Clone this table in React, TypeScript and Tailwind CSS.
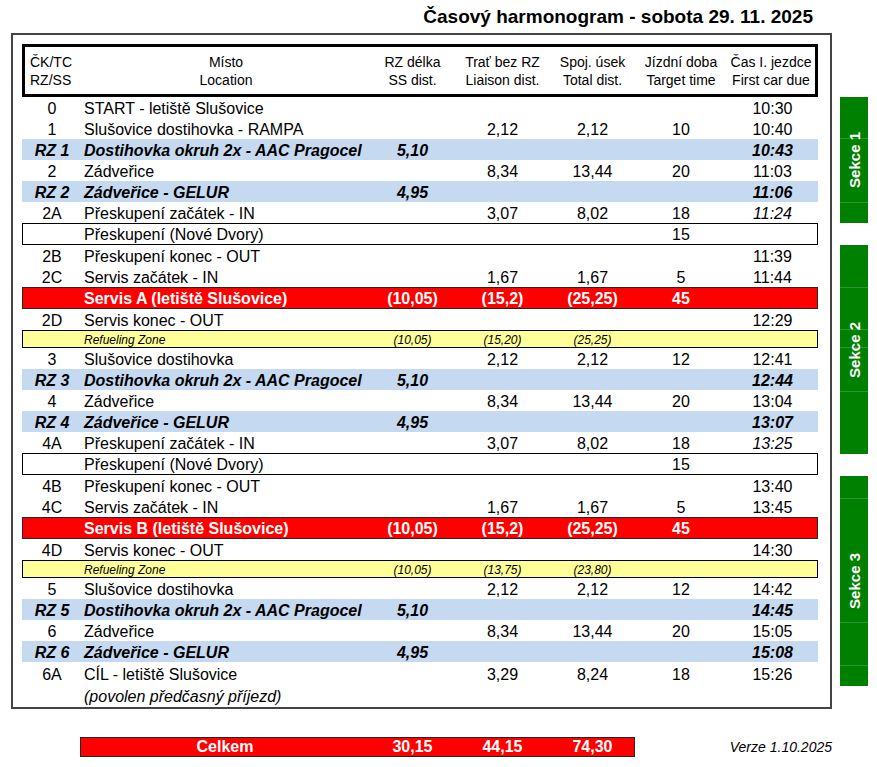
type Kind = "plain" | "rz" | "box" | "red" | "ref" | "note" | "last";

interface Row {
  kind: Kind;
  id?: string;
  name: string;
  rz?: string;
  trat?: string;
  spoj?: string;
  doba?: string;
  cas?: string;
  casItalic?: boolean;
}

const rows: Row[] = [
  { kind: "plain", id: "0", name: "START - letiště Slušovice", cas: "10:30" },
  { kind: "plain", id: "1", name: "Slušovice dostihovka - RAMPA", trat: "2,12", spoj: "2,12", doba: "10", cas: "10:40" },
  { kind: "rz", id: "RZ 1", name: "Dostihovka okruh 2x - AAC Pragocel", rz: "5,10", cas: "10:43" },
  { kind: "plain", id: "2", name: "Zádveřice", trat: "8,34", spoj: "13,44", doba: "20", cas: "11:03" },
  { kind: "rz", id: "RZ 2", name: "Zádveřice - GELUR", rz: "4,95", cas: "11:06" },
  { kind: "plain", id: "2A", name: "Přeskupení začátek - IN", trat: "3,07", spoj: "8,02", doba: "18", cas: "11:24", casItalic: true },
  { kind: "box", name: "Přeskupení (Nové Dvory)", doba: "15" },
  { kind: "plain", id: "2B", name: "Přeskupení konec - OUT", cas: "11:39" },
  { kind: "plain", id: "2C", name: "Servis začátek - IN", trat: "1,67", spoj: "1,67", doba: "5", cas: "11:44" },
  { kind: "red", name: "Servis A (letiště Slušovice)", rz: "(10,05)", trat: "(15,2)", spoj: "(25,25)", doba: "45" },
  { kind: "plain", id: "2D", name: "Servis konec - OUT", cas: "12:29" },
  { kind: "ref", name: "Refueling Zone", rz: "(10,05)", trat: "(15,20)", spoj: "(25,25)" },
  { kind: "plain", id: "3", name: "Slušovice dostihovka", trat: "2,12", spoj: "2,12", doba: "12", cas: "12:41" },
  { kind: "rz", id: "RZ 3", name: "Dostihovka okruh 2x - AAC Pragocel", rz: "5,10", cas: "12:44" },
  { kind: "plain", id: "4", name: "Zádveřice", trat: "8,34", spoj: "13,44", doba: "20", cas: "13:04" },
  { kind: "rz", id: "RZ 4", name: "Zádveřice - GELUR", rz: "4,95", cas: "13:07" },
  { kind: "plain", id: "4A", name: "Přeskupení začátek - IN", trat: "3,07", spoj: "8,02", doba: "18", cas: "13:25", casItalic: true },
  { kind: "box", name: "Přeskupení (Nové Dvory)", doba: "15" },
  { kind: "plain", id: "4B", name: "Přeskupení konec - OUT", cas: "13:40" },
  { kind: "plain", id: "4C", name: "Servis začátek - IN", trat: "1,67", spoj: "1,67", doba: "5", cas: "13:45" },
  { kind: "red", name: "Servis B (letiště Slušovice)", rz: "(10,05)", trat: "(15,2)", spoj: "(25,25)", doba: "45" },
  { kind: "plain", id: "4D", name: "Servis konec - OUT", cas: "14:30" },
  { kind: "ref", name: "Refueling Zone", rz: "(10,05)", trat: "(13,75)", spoj: "(23,80)" },
  { kind: "plain", id: "5", name: "Slušovice dostihovka", trat: "2,12", spoj: "2,12", doba: "12", cas: "14:42" },
  { kind: "rz", id: "RZ 5", name: "Dostihovka okruh 2x - AAC Pragocel", rz: "5,10", cas: "14:45" },
  { kind: "plain", id: "6", name: "Zádveřice", trat: "8,34", spoj: "13,44", doba: "20", cas: "15:05" },
  { kind: "rz", id: "RZ 6", name: "Zádveřice - GELUR", rz: "4,95", cas: "15:08" },
  { kind: "last", id: "6A", name: "CÍL - letiště Slušovice", trat: "3,29", spoj: "8,24", doba: "18", cas: "15:26" },
  { kind: "note", name: "(povolen předčasný příjezd)" },
];

const kindClass: Record<Kind, string> = {
  plain: "h-[21px] pt-[2px] items-center text-[16px]",
  rz: "h-[21px] pt-[2px] items-center text-[16px] bg-[#c5d9f1] font-bold italic",
  box: "h-[22px] pt-[2px] items-center text-[16px] shadow-[inset_0_0_0_1px_#000]",
  red: "h-[22px] pt-[2px] items-center text-[16px] bg-[#ff0000] text-white font-bold shadow-[inset_0_0_0_1px_#262626]",
  ref: "h-[18px] pt-[2px] items-center text-[12px] bg-[#ffff99] italic shadow-[inset_0_0_0_1px_#000]",
  last: "h-[23px] pb-[2px] items-end text-[16px]",
  note: "h-[22px] pb-[2px] items-end text-[16px] italic",
};

function TableRow({ r }: { r: Row }) {
  return (
    <div className={`grid grid-cols-[60px_288px_85px_95px_85px_92px_91px] leading-none ${kindClass[r.kind]}`}>
      <div className="text-center">{r.id}</div>
      <div className="pl-[2px] whitespace-nowrap">{r.name}</div>
      <div className="text-center">{r.rz}</div>
      <div className="text-center">{r.trat}</div>
      <div className="text-center">{r.spoj}</div>
      <div className="text-center">{r.doba}</div>
      <div className={`text-center ${r.casItalic ? "italic" : ""}`}>{r.cas}</div>
    </div>
  );
}

function Sekce({ label, h, lines }: { label: string; h: string; lines: string[] }) {
  return (
    <div className={`grid w-[28px] bg-[#008000] ${h}`}>
      <div className="[grid-area:1/1] flex flex-col">
        {lines.map((l, i) => (
          <div key={i} className={`${l} border-b border-[#2f962f]`} />
        ))}
        <div className="flex-1" />
      </div>
      <div className="[grid-area:1/1] flex items-center justify-center">
        <span className="[writing-mode:vertical-rl] rotate-180 text-white font-bold text-[15px] leading-none">
          {label}
        </span>
      </div>
    </div>
  );
}

export default function App() {
  return (
    <div className="w-[877px] h-[767px] bg-white text-black font-['Liberation_Sans',Arial,sans-serif] overflow-hidden">
      <div className="h-[33px] flex items-center justify-end pr-[64px]">
        <h1 className="text-[19px] font-bold leading-none">Časový harmonogram - sobota 29. 11. 2025</h1>
      </div>

      <div className="flex items-start pl-[11px]">
        <div className="border-2 border-[#444] pt-[9px] pl-[9px] pr-[12px]">
          <div className="h-[53px] border-[3px] border-black flex items-center">
            <div className="grid grid-cols-[57px_288px_85px_95px_85px_92px_88px] text-[14px] leading-[18px]">
              <div className="pl-[5px]">ČK/TC<br />RZ/SS</div>
              <div className="text-center">Místo<br />Location</div>
              <div className="text-center">RZ délka<br />SS dist.</div>
              <div className="text-center">Trať bez RZ<br />Liaison dist.</div>
              <div className="text-center">Spoj. úsek<br />Total dist.</div>
              <div className="text-center">Jízdní doba<br />Target time</div>
              <div className="text-center">Čas I. jezdce<br />First car due</div>
            </div>
          </div>
          {rows.map((r, i) => (
            <TableRow key={i} r={r} />
          ))}
        </div>

        <div className="ml-[8px] pt-[64px] flex flex-col gap-[22px]">
          <Sekce label="Sekce 1" h="h-[126px]" lines={["h-[42px]", "h-[64px]"]} />
          <Sekce label="Sekce 2" h="h-[209px]" lines={["h-[43px]", "h-[42px]", "h-[18px]", "h-[44px]"]} />
          <Sekce label="Sekce 3" h="h-[210px]" lines={["h-[23px]", "h-[124px]", "h-[43px]"]} />
        </div>
      </div>

      <div className="mt-[28px] w-[832px] pl-[80px] flex items-center">
        <div className="h-[20px] grid grid-cols-[290px_85px_95px_85px] items-center bg-[#ff0000] text-white font-bold text-[16px] leading-none shadow-[inset_0_0_0_1px_#262626]">
          <div className="text-center">Celkem</div>
          <div className="text-center">30,15</div>
          <div className="text-center">44,15</div>
          <div className="text-center">74,30</div>
        </div>
        <div className="ml-auto italic text-[14px] leading-none">Verze 1.10.2025</div>
      </div>
    </div>
  );
}
